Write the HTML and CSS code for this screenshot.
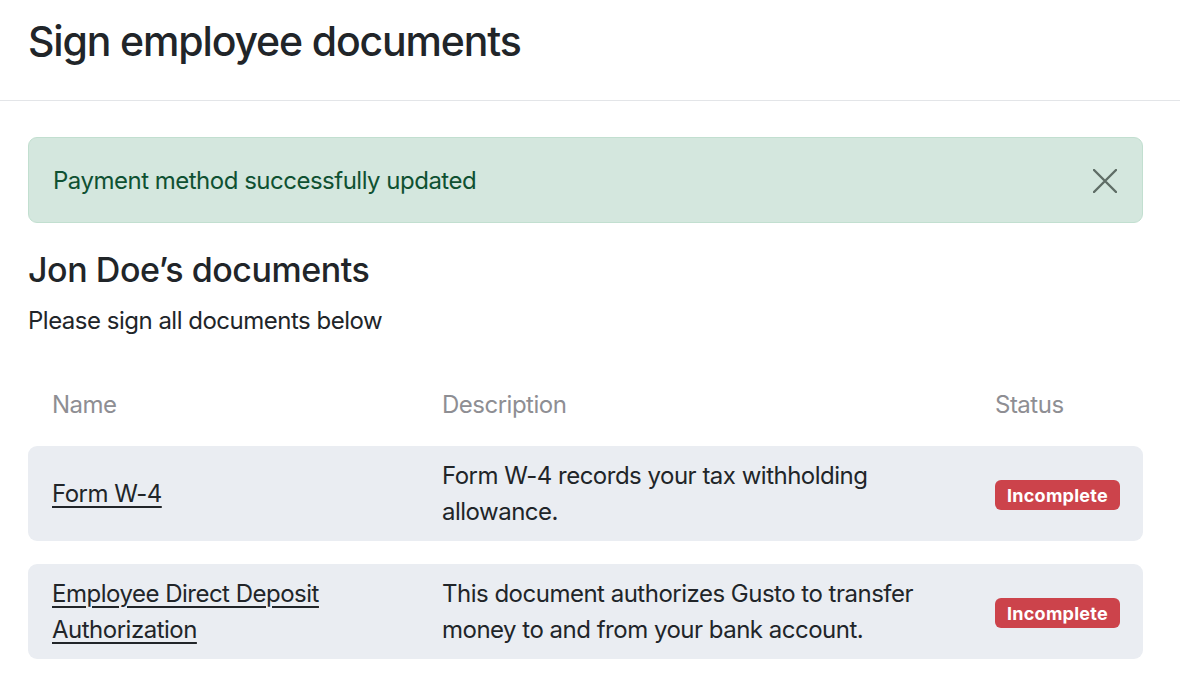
FILE: index.html
```html
<!DOCTYPE html>
<html lang="en">
<head>
<meta charset="utf-8">
<title>Sign employee documents</title>
<link rel="stylesheet" href="styles.css">
</head>
<body>
<header class="page-header">
  <h1 class="page-title">Sign employee documents</h1>
</header>
<main class="content">
  <div class="alert" role="alert">
    <span class="alert-text">Payment method successfully updated</span>
    <button class="alert-close" type="button" aria-label="Close">
      <svg width="24" height="24" viewBox="0 0 24 24" aria-hidden="true">
        <path d="M1 1 L23 23 M23 1 L1 23" stroke="currentColor" stroke-width="2.4" stroke-linecap="round" fill="none"/>
      </svg>
    </button>
  </div>
  <h2 class="section-title">Jon Doe’s documents</h2>
  <p class="section-sub">Please sign all documents below</p>
  <div class="doc-table">
    <div class="doc-row doc-head">
      <div class="cell">Name</div>
      <div class="cell">Description</div>
      <div class="cell">Status</div>
    </div>
    <div class="doc-row doc-item">
      <div class="cell"><a class="doc-link" href="#">Form W-4</a></div>
      <div class="cell">Form W-4 records your tax withholding allowance.</div>
      <div class="cell"><span class="badge">Incomplete</span></div>
    </div>
    <div class="doc-row doc-item">
      <div class="cell"><a class="doc-link" href="#">Employee Direct Deposit Authorization</a></div>
      <div class="cell">This document authorizes Gusto to transfer money to and from your bank account.</div>
      <div class="cell"><span class="badge">Incomplete</span></div>
    </div>
  </div>
</main>
</body>
</html>
```

FILE: styles.css
```css
* { box-sizing: border-box; }
html, body { margin: 0; padding: 0; background: #fff; }
body {
  font-family: Inter, "Noto Sans", "Liberation Sans", sans-serif;
  font-size: 24px;
  line-height: 1.5;
  color: #212529;
  letter-spacing: -0.5px;
}
.page-header {
  height: 101px;
  padding: 17px 28px 0;
  border-bottom: 1px solid #e3e5e8;
}
.page-title {
  margin: 0;
  font-size: 41px;
  font-weight: 500;
  line-height: 1.2;
  letter-spacing: -1.15px;
}
.content {
  padding: 36px 0 0 28px;
  width: 1143px;
}
.alert {
  display: flex;
  align-items: center;
  justify-content: space-between;
  height: 86px;
  padding: 1px 24px 0;
  background: #d4e7de;
  border: 1px solid #c2dfd0;
  border-radius: 9px;
  color: #0f5132;
}
.alert-text { line-height: 36px; }
.alert-close {
  display: flex;
  padding: 0;
  margin-right: 1px;
  border: 0;
  background: transparent;
  color: #5f6d66;
}
.section-title {
  margin: 27px 0 12px;
  font-size: 34px;
  font-weight: 500;
  line-height: 1.2;
  letter-spacing: -0.45px;
}
.section-sub {
  margin: 0;
}
.doc-table {
  display: flex;
  flex-direction: column;
  gap: 23px;
  margin-top: 48px;
}
.doc-row {
  display: grid;
  grid-template-columns: 390px 553px 1fr;
  align-items: center;
}
.cell { padding: 0 24px; }
.doc-head { color: #8e8e93; }
.doc-item {
  background: #eaedf2;
  border-radius: 9px;
  padding: 12px 0 11px;
}
.doc-link {
  color: #212529;
  text-decoration: underline;
  text-underline-offset: 4px;
  text-decoration-thickness: 1.5px;
}
.badge {
  display: inline-block;
  padding: 5px 12px 4px;
  font-size: 18px;
  font-weight: 700;
  line-height: 21px;
  color: #fff;
  background: #cc434b;
  border-radius: 6px;
  letter-spacing: 0.25px;
}
```
